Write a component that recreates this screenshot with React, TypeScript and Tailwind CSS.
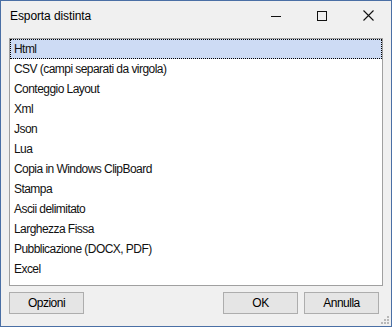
import React from "react";

const items = [
  "Html",
  "CSV (campi separati da virgola)",
  "Conteggio Layout",
  "Xml",
  "Json",
  "Lua",
  "Copia in Windows ClipBoard",
  "Stampa",
  "Ascii delimitato",
  "Larghezza Fissa",
  "Pubblicazione (DOCX, PDF)",
  "Excel",
];

export default function App() {
  return (
    <div
      className="relative w-[392px] h-[327px] border border-[#4a6fa5] bg-[#f0f0f0] flex flex-col text-[#000]"
      style={{ fontFamily: '"Liberation Sans", Arial, sans-serif' }}
    >
      <div className="h-[29px] flex items-center pl-[9px] shrink-0">
        <span className="text-[12px] tracking-[-0.1px] text-black">Esporta distinta</span>
        <div className="ml-auto flex items-center h-full">
          <div className="w-[46px] h-full flex items-center justify-center">
            <svg width="10" height="10" viewBox="0 0 10 10">
              <rect x="0" y="5" width="10" height="1" fill="#111" />
            </svg>
          </div>
          <div className="w-[46px] h-full flex items-center justify-center">
            <svg width="10" height="10" viewBox="0 0 10 10">
              <rect x="0.5" y="0.5" width="9" height="9" fill="none" stroke="#111" strokeWidth="1" />
            </svg>
          </div>
          <div className="w-[46px] h-full flex items-center justify-center">
            <svg width="11" height="11" viewBox="0 0 11 11">
              <path d="M0.5 0.5 L10.5 10.5 M10.5 0.5 L0.5 10.5" stroke="#111" strokeWidth="1.1" />
            </svg>
          </div>
        </div>
      </div>
      <div className="mx-[8px] mt-[8px] h-[248px] border border-[#a0a0a0] bg-white shrink-0">
        {items.map((t, i) => (
          <div
            key={t}
            className={
              "h-[20px] flex items-center pl-[3px] text-[12px] tracking-[-0.55px] leading-none text-[#111]" +
              (i === 0 ? " bg-[#cddbf4] border border-dotted border-black" : " border border-transparent")
            }
          >
            {t}
          </div>
        ))}
      </div>
      <div className="flex mx-[8px] mt-[6px] gap-[6px] text-[12px] tracking-[-0.5px]">
        <button className="w-[75px] h-[22px] border border-[#adadad] bg-[#e5e5e5] flex items-center justify-center">
          Opzioni
        </button>
        <div className="flex-1" />
        <button className="w-[75px] h-[22px] border border-[#adadad] bg-[#e5e5e5] flex items-center justify-center">
          OK
        </button>
        <button className="w-[75px] h-[22px] border border-[#adadad] bg-[#e5e5e5] flex items-center justify-center mr-[4px]">
          Annulla
        </button>
      </div>
      <svg className="absolute right-[1px] bottom-[1px]" width="9" height="9" viewBox="0 0 9 9">
        <rect x="6" y="0" width="2" height="2" fill="#b8b8b8" />
        <rect x="3" y="3" width="2" height="2" fill="#b8b8b8" />
        <rect x="6" y="3" width="2" height="2" fill="#b8b8b8" />
        <rect x="0" y="6" width="2" height="2" fill="#b8b8b8" />
        <rect x="3" y="6" width="2" height="2" fill="#b8b8b8" />
        <rect x="6" y="6" width="2" height="2" fill="#b8b8b8" />
      </svg>
    </div>
  );
}
